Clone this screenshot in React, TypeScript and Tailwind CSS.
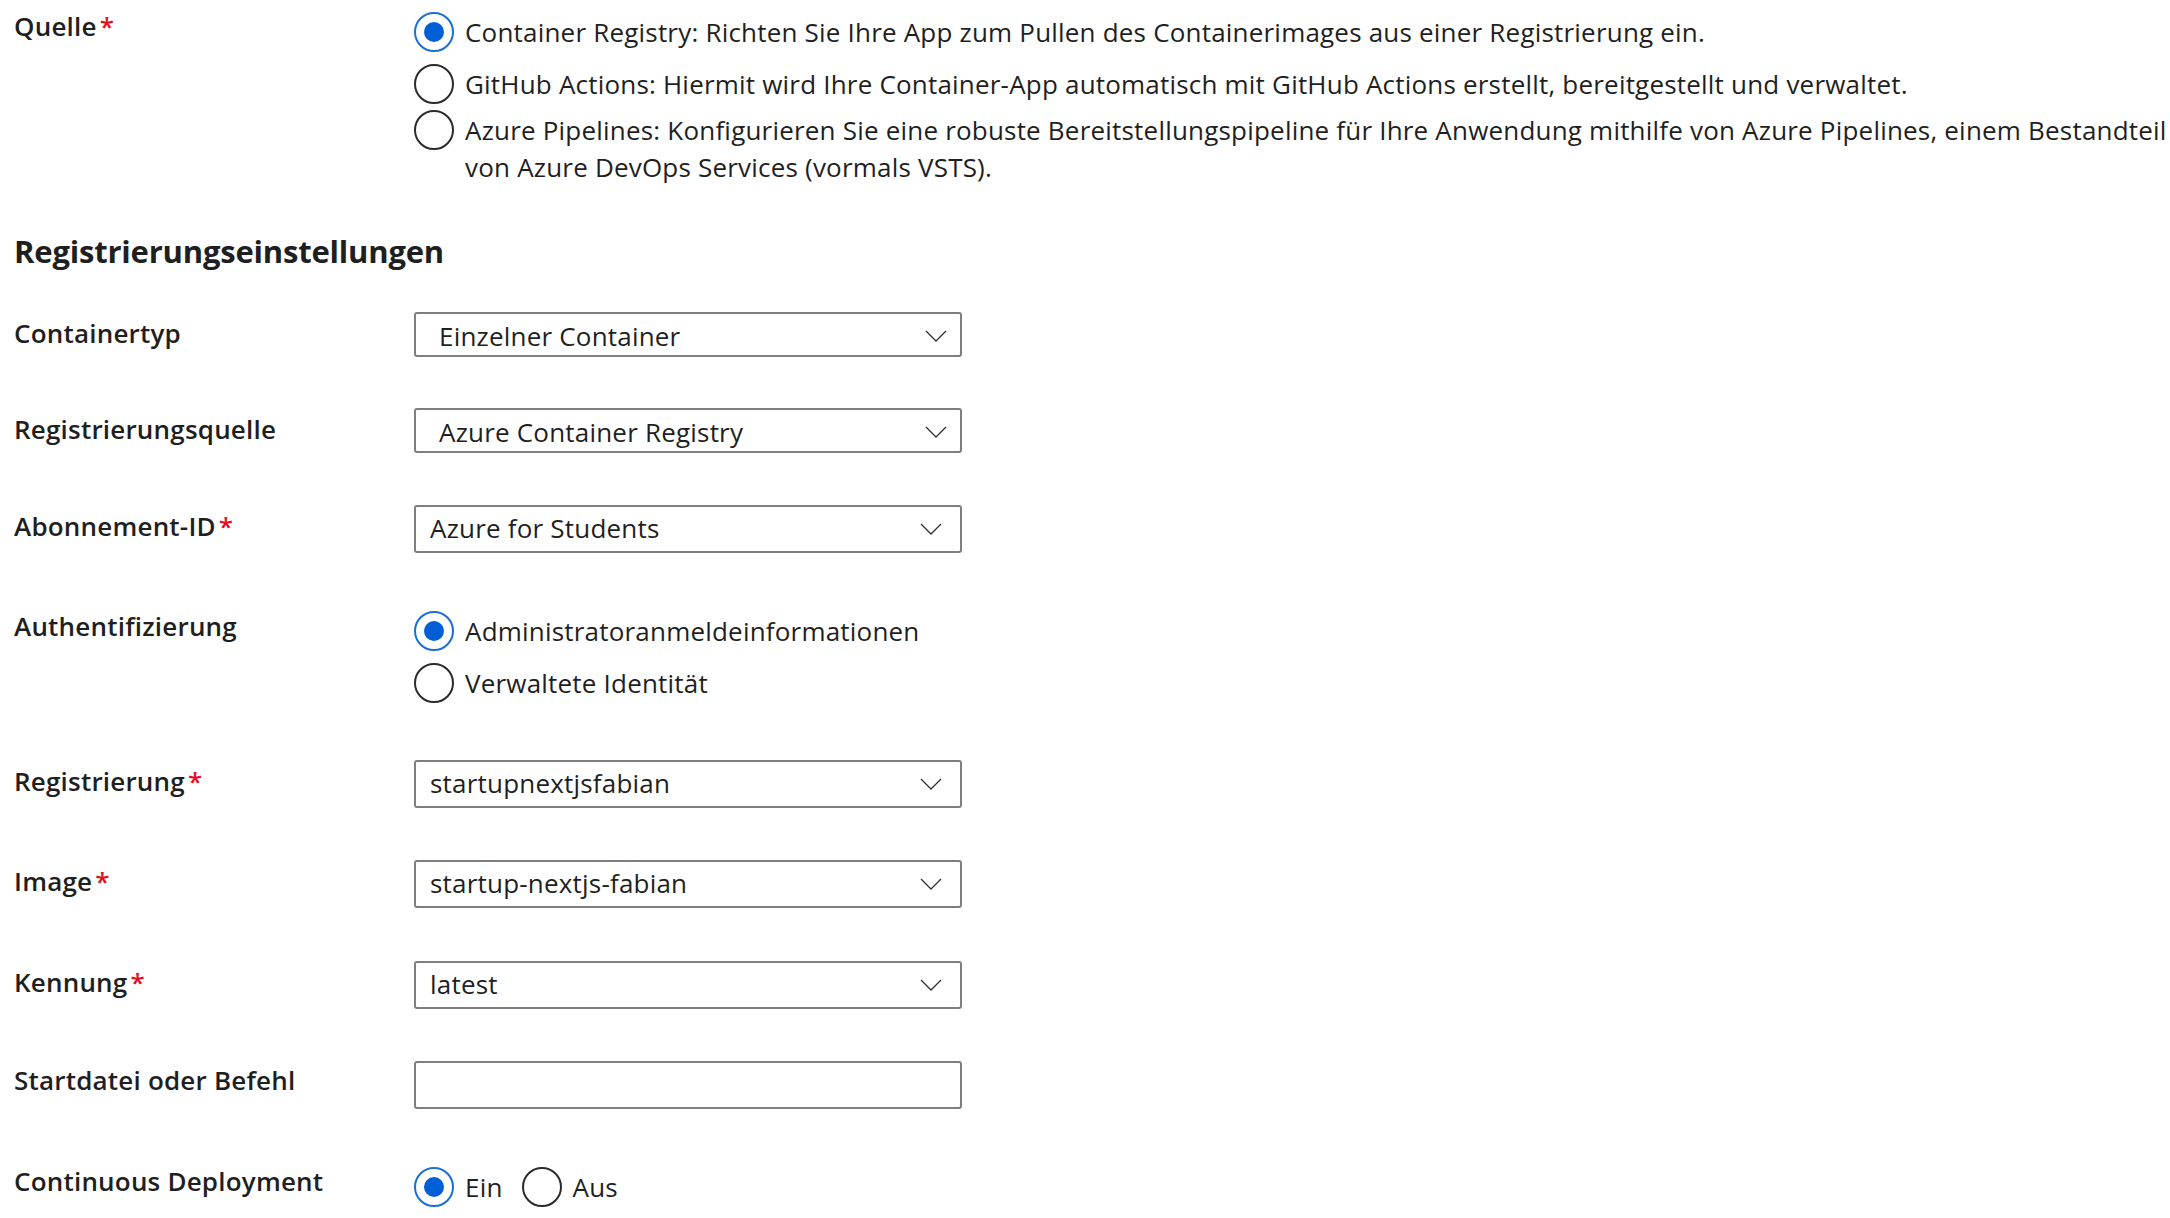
import React from "react";

const FONT = { fontFamily: '"Open Sans", "Noto Sans", Arial, sans-serif' };

function Radio({ checked }: { checked?: boolean }) {
  return checked ? (
    <span className="flex h-[40px] w-[40px] shrink-0 items-center justify-center rounded-full border-2 border-[#1a6fd6] bg-white">
      <span className="h-[20px] w-[20px] rounded-full bg-[#005fd7]" />
    </span>
  ) : (
    <span className="block h-[40px] w-[40px] shrink-0 rounded-full border-2 border-[#2b2b2b] bg-white" />
  );
}

function Chevron() {
  return (
    <svg width="22" height="12" viewBox="0 0 22 12" fill="none" className="shrink-0">
      <path d="M1 1 L11 11 L21 1" stroke="#323130" strokeWidth="1.3" strokeLinejoin="miter" />
    </svg>
  );
}

function Label({ text, required }: { text: string; required?: boolean }) {
  return (
    <div className="w-[400px] shrink-0 font-semibold leading-[36px] text-[#1f1f1f]">
      {text}
      {required && <span className="ml-[3px] text-[#e5101f]">*</span>}
    </div>
  );
}

function Select({ value, wide }: { value: string; wide?: boolean }) {
  return (
    <div
      className={
        "flex w-[548px] items-center justify-between rounded-[3px] border-2 border-[#7f7f7f] bg-white " +
        (wide ? "h-[45px] pl-[23px] pr-[13px] pt-[2px]" : "h-[48px] pl-[14px] pr-[18px] pb-[3px]")
      }
    >
      <span className="leading-[36px] text-[#1f1f1f]">{value}</span>
      <span className={wide ? "" : "pt-[3px]"}>
        <Chevron />
      </span>
    </div>
  );
}

function SelectRow({
  label,
  required,
  value,
  wide,
  className,
}: {
  label: string;
  required?: boolean;
  value: string;
  wide?: boolean;
  className?: string;
}) {
  return (
    <div className={"flex items-start " + (className ?? "")}>
      <div className="pt-[3px]">
        <Label text={label} required={required} />
      </div>
      <Select value={value} wide={wide} />
    </div>
  );
}

export default function App() {
  return (
    <div
      className="min-h-[1218px] w-[2170px] overflow-hidden bg-white pl-[14px] text-[26px] tracking-[0.2px] text-[#1f1f1f]"
      style={FONT}
    >
      {/* Quelle */}
      <div className="flex items-start pt-[6px]">
        <div className="pt-[2px]">
          <Label text="Quelle" required />
        </div>
        <div className="flex flex-col pt-[6px] whitespace-nowrap">
          <div className="flex h-[40px] items-center gap-[11px]">
            <Radio checked />
            <span className="leading-[40px]">
              Container Registry: Richten Sie Ihre App zum Pullen des Containerimages aus einer Registrierung ein.
            </span>
          </div>
          <div className="mt-[12px] flex h-[40px] items-center gap-[11px]">
            <Radio />
            <span className="leading-[40px]">
              GitHub Actions: Hiermit wird Ihre Container-App automatisch mit GitHub Actions erstellt, bereitgestellt und verwaltet.
            </span>
          </div>
          <div className="mt-[6px] flex items-start gap-[11px]">
            <Radio />
            <span className="pt-[2px] leading-[37px]">
              Azure Pipelines: Konfigurieren Sie eine robuste Bereitstellungspipeline für Ihre Anwendung mithilfe von Azure Pipelines, einem Bestandteil
              <br />
              von Azure DevOps Services (vormals VSTS).
            </span>
          </div>
        </div>
      </div>

      {/* Heading */}
      <h2 className="mt-[45px] text-[31px] font-bold leading-[40px] tracking-[-0.2px] text-[#1f1f1f]">
        Registrierungseinstellungen
      </h2>

      <SelectRow className="mt-[41px]" label="Containertyp" value="Einzelner Container" wide />
      <SelectRow className="mt-[51px]" label="Registrierungsquelle" value="Azure Container Registry" wide />
      <SelectRow className="mt-[52px]" label="Abonnement-ID" required value="Azure for Students" />

      {/* Authentifizierung */}
      <div className="mt-[53px] flex items-start">
        <div className="pt-[2px]">
          <Label text="Authentifizierung" />
        </div>
        <div className="flex flex-col pt-[5px]">
          <div className="flex h-[40px] items-center gap-[11px]">
            <Radio checked />
            <span className="leading-[40px]">Administratoranmeldeinformationen</span>
          </div>
          <div className="mt-[12px] flex h-[40px] items-center gap-[11px]">
            <Radio />
            <span className="leading-[40px]">Verwaltete Identität</span>
          </div>
        </div>
      </div>

      <SelectRow className="mt-[57px]" label="Registrierung" required value="startupnextjsfabian" />
      <SelectRow className="mt-[52px]" label="Image" required value="startup-nextjs-fabian" />
      <SelectRow className="mt-[53px]" label="Kennung" required value="latest" />

      {/* Startdatei */}
      <div className="mt-[52px] flex items-start">
        <div className="pt-[1px]">
          <Label text="Startdatei oder Befehl" />
        </div>
        <div className="h-[48px] w-[548px] rounded-[3px] border-2 border-[#7f7f7f] bg-white" />
      </div>

      {/* Continuous Deployment */}
      <div className="mt-[52px] flex items-start">
        <div className="pt-[2px]">
          <Label text="Continuous Deployment" />
        </div>
        <div className="flex items-center pt-[6px]">
          <Radio checked />
          <span className="ml-[11px] leading-[40px]">Ein</span>
          <span className="ml-[19px]">
            <Radio />
          </span>
          <span className="ml-[11px] leading-[40px]">Aus</span>
        </div>
      </div>
    </div>
  );
}
